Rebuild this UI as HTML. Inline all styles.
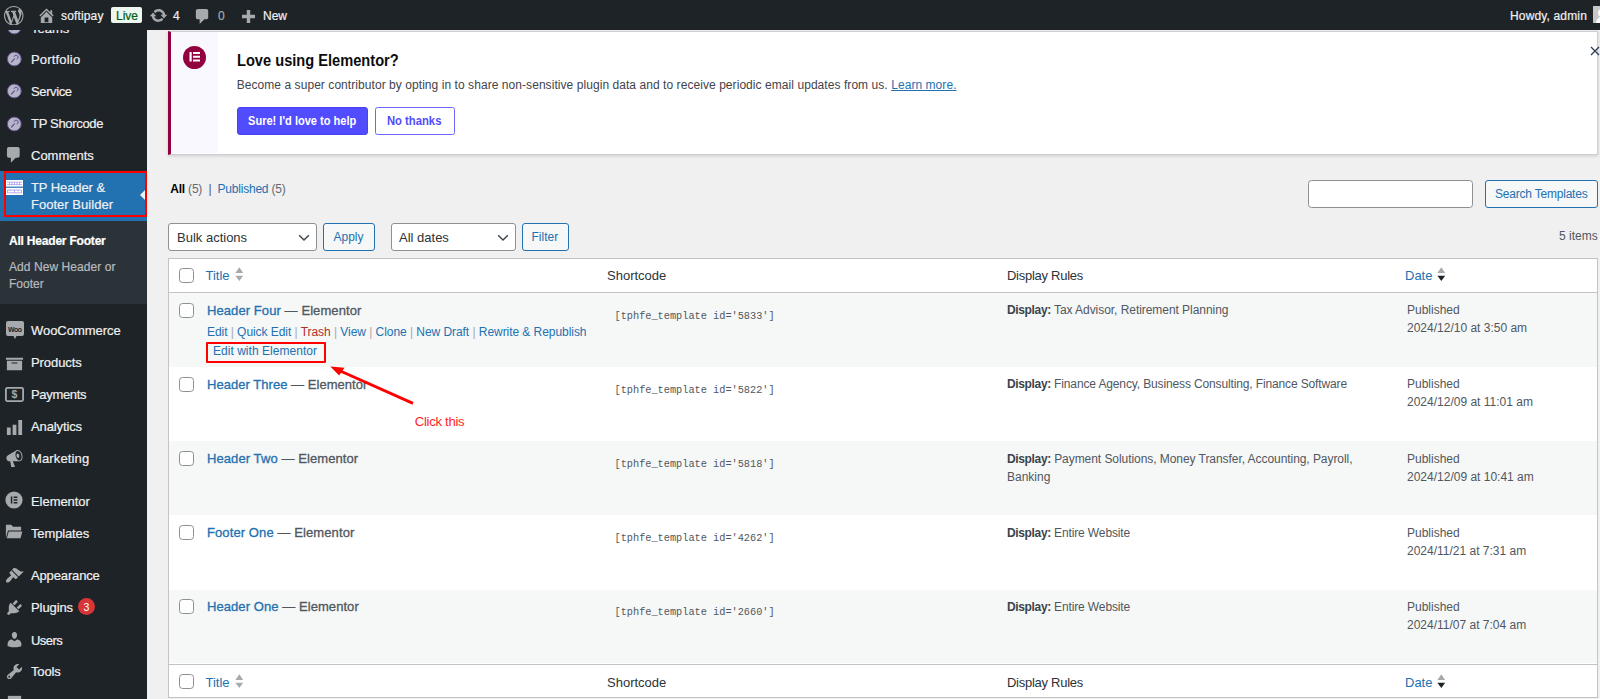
<!DOCTYPE html>
<html lang="en">
<head>
<meta charset="utf-8">
<title>Header Footer Templates</title>
<style>
*{box-sizing:border-box;margin:0;padding:0}
html,body{width:1600px;height:699px;overflow:hidden;background:#f0f0f1}
body{font-family:"Liberation Sans",sans-serif;font-size:12px;color:#3c434a;position:relative}
a{color:#2271b1;text-decoration:none}
.abs{position:absolute}
.t{position:absolute;white-space:nowrap;line-height:1}

/* admin bar */
#bar{position:absolute;left:0;top:0;width:1600px;height:30px;background:#1d2327;z-index:5}
#bar .t{color:#f0f0f1;font-size:12px;-webkit-text-stroke:.2px currentColor}

/* sidebar */
#side{position:absolute;left:0;top:30px;width:147px;height:669px;background:#1d2327}
#side .m{position:absolute;left:31px;color:#f0f0f1;font-size:13px;white-space:nowrap;line-height:1;-webkit-text-stroke:.2px currentColor}
#side .ic{position:absolute}

/* notice */
#notice{position:absolute;left:167.5px;top:31px;width:1430.5px;height:124px;background:#fff;border:1px solid #ccd0d4;border-left:3.7px solid #93003f;box-shadow:0 1px 3px rgba(0,0,0,.15)}

/* table */
#tbl{position:absolute;left:168px;top:258px;width:1431px;height:460px;background:#fff;border:1px solid #c3c4c7}
.row{position:absolute;left:169px;width:1428px;height:74px}
.alt{background:#f6f7f7}
.cb{position:absolute;width:15px;height:15px;border:1px solid #8c8f94;border-radius:3.5px;background:#fff}
.ttl{font-size:13px;font-weight:normal;-webkit-text-stroke:.3px currentColor}.ttl a{-webkit-text-stroke:.3px #2271b1}
.code{font-family:"Liberation Mono","DejaVu Sans Mono",monospace;font-size:10.27px;color:#50575e;margin-top:1.1px}
.sel{position:absolute;height:28px;background:#fff;border:1px solid #8c8f94;border-radius:3px}
.btn{position:absolute;height:28px;background:#f6f7f7;border:1px solid #2271b1;border-radius:3px;color:#2271b1;text-align:center}
</style>
</head>
<body>

<!-- SIDEBAR -->
<div id="side">
<svg class="ic" style="left:6px;top:-11.500px" width="16" height="16" viewBox="0 0 16 16"><circle cx="8.300" cy="8" r="6.900" fill="#b7b3c9" stroke="#5f5088" stroke-width="1"/><path d="M5.300 11.300l3.400-3.800" stroke="#4f4285" stroke-width="1.100" fill="none"/><path d="M8.200 5.600a2 2 0 1 1 2.600 2.500" fill="none" stroke="#4f4285" stroke-width="1"/></svg><span class="m" id="m_teams" style="top:-8.300px">Teams</span>
<svg class="ic" style="left:6px;top:21px" width="16" height="16" viewBox="0 0 16 16"><circle cx="8.300" cy="8" r="6.900" fill="#b7b3c9" stroke="#5f5088" stroke-width="1"/><path d="M5.300 11.300l3.400-3.800" stroke="#4f4285" stroke-width="1.100" fill="none"/><path d="M8.200 5.600a2 2 0 1 1 2.600 2.500" fill="none" stroke="#4f4285" stroke-width="1"/></svg><span class="m" id="m_port" style="top:22.5px;letter-spacing:0.177px">Portfolio</span>
<svg class="ic" style="left:6px;top:53px" width="16" height="16" viewBox="0 0 16 16"><circle cx="8.300" cy="8" r="6.900" fill="#b7b3c9" stroke="#5f5088" stroke-width="1"/><path d="M5.300 11.300l3.400-3.800" stroke="#4f4285" stroke-width="1.100" fill="none"/><path d="M8.200 5.600a2 2 0 1 1 2.600 2.500" fill="none" stroke="#4f4285" stroke-width="1"/></svg><span class="m" id="m_serv" style="top:54.5px;letter-spacing:-0.380px">Service</span>
<svg class="ic" style="left:6px;top:85.5px" width="16" height="16" viewBox="0 0 16 16"><circle cx="8.300" cy="8" r="6.900" fill="#b7b3c9" stroke="#5f5088" stroke-width="1"/><path d="M5.300 11.300l3.400-3.800" stroke="#4f4285" stroke-width="1.100" fill="none"/><path d="M8.200 5.600a2 2 0 1 1 2.600 2.500" fill="none" stroke="#4f4285" stroke-width="1"/></svg><span class="m" id="m_tps" style="top:87.0px;letter-spacing:-0.313px">TP Shorcode</span>
<svg class="ic" style="left:4.300px;top:115px" width="19.600" height="19.600" viewBox="0 0 20 20"><path fill="#a7aaad" d="M5 2h9c1.1 0 2 .9 2 2v7c0 1.1-.9 2-2 2h-2l-5 5v-5H5c-1.100 0-2-.9-2-2V4c0-1.100.9-2 2-2z"/></svg><span class="m" id="m_comm" style="top:118.5px">Comments</span>
<div class="abs" style="left:0;top:141px;width:147px;height:49.6px;background:#2271b1"></div>
<div class="abs" style="left:140px;top:158px;width:0;height:0;border-top:7px solid transparent;border-bottom:7px solid transparent;border-right:7px solid #f0f0f1"></div>
<div class="abs" style="left:3.6px;top:141.4px;width:143.4px;height:45.7px;border:2.5px solid #ff0000"></div>
<svg class="ic" style="left:6px;top:150px" width="17" height="15" viewBox="0 0 17 15"><rect x="0" y="0" width="17" height="6.6" fill="#fff"/><rect x="0" y="7.8" width="17" height="7.2" fill="#fff"/><g stroke="#8f7be0" stroke-width=".6" fill="none"><path d="M1 2.200h15M1 4.600h15M3.500 2.200v2.400M6 2.200v2.400M8.500 2.200v2.400M11 2.200v2.400M13.500 2.200v2.400"/><path d="M1.500 10h14M1.500 12.800h14M1.500 10v2.800M8.500 10v2.800M15.500 10v2.800M4 10v1.400M12 10v1.400"/></g></svg>
<span class="m" id="m_tph" style="top:151.0px;letter-spacing:-0.084px">TP Header &amp;</span><span class="m" id="m_tpf" style="top:168.0px;letter-spacing:0.025px">Footer Builder</span>
<div class="abs" style="left:0;top:190.6px;width:147px;height:83px;background:#2c3338"></div>
<span class="m" id="m_all" style="left:9px;top:205px;font-size:12px;font-weight:bold;color:#fff;letter-spacing:-0.202px">All Header Footer</span>
<span class="m" id="m_add1" style="left:9px;top:230.5px;font-size:12px;color:#b6babf;letter-spacing:0.071px">Add New Header or</span>
<span class="m" id="m_add2" style="left:9px;top:247.600px;font-size:12px;color:#b6babf">Footer</span>
<svg class="ic" style="left:5.5px;top:291px" width="18" height="18" viewBox="0 0 18 18"><path fill="#a7aaad" d="M2 0h14a2 2 0 0 1 2 2v11a2 2 0 0 1-2 2h-5.500l-1.500 3-1.500-3H2a2 2 0 0 1-2-2V2a2 2 0 0 1 2-2z"/><text x="9" y="10.500" font-family="Liberation Sans,sans-serif" font-size="7" font-weight="bold" text-anchor="middle" fill="#1d2327" textLength="14">Woo</text></svg><span class="m" id="m_woo" style="top:294.0px;letter-spacing:-0.042px">WooCommerce</span>
<svg class="ic" style="left:5px;top:323.5px" width="19" height="19" viewBox="0 0 20 20"><path fill="#a7aaad" d="M19 4v2H1V4h18zM2 7h16v10H2V7zm11 3V9H7v1h6z"/></svg><span class="m" id="m_prod" style="top:326.0px;letter-spacing:-0.070px">Products</span>
<svg class="ic" style="left:5px;top:357px" width="19" height="15" viewBox="0 0 19 15"><rect x=".9" y=".9" width="17.200" height="13.200" rx="1.500" fill="none" stroke="#a7aaad" stroke-width="1.800"/><text x="9.500" y="11.300" font-family="Liberation Sans,sans-serif" font-size="10.500" font-weight="bold" text-anchor="middle" fill="#a7aaad">$</text></svg><span class="m" id="m_pay" style="top:358.0px;letter-spacing:-0.320px">Payments</span>
<svg class="ic" style="left:5px;top:387.5px" width="19" height="19" viewBox="0 0 20 20"><path fill="#a7aaad" d="M18 18V2h-4v16h4zm-6 0V7H8v11h4zm-6 0v-8H2v8h4z"/></svg><span class="m" id="m_ana" style="top:390.0px;letter-spacing:-0.115px">Analytics</span>
<svg class="ic" style="left:5px;top:419px" width="19" height="19" viewBox="0 0 20 20"><path fill="#a7aaad" d="M18.15 5.94c.46 1.62.38 3.22-.02 4.48-.42 1.28-1.26 2.18-2.3 2.48-.16.06-.26.06-.4.06-.06.02-.12.02-.18.02-.06.02-.14.02-.22.02h-6.8l2.22 5.5c.02.14-.06.26-.14.34-.08.1-.24.16-.34.16H6.950c-.1 0-.26-.06-.34-.16-.08-.08-.16-.2-.14-.34l-1-5.5H4.250l-.02-.02c-.5.06-1.080-.18-1.540-.62s-.88-1.080-1.060-1.880c-.24-.8-.2-1.560-.02-2.200.18-.62.58-1.080 1.060-1.300l.02-.02 9-5.400c.1-.06.18-.1.24-.16.06-.04.14-.08.24-.12.16-.08.28-.12.5-.18 1.040-.3 2.240.1 3.220.98s1.840 2.240 2.260 3.860zm-2.580 5.980h-.02c.4-.1.74-.34 1.040-.7.58-.7.86-1.760.86-3.040 0-.64-.1-1.300-.28-1.980-.34-1.360-1.020-2.500-1.780-3.240s-1.680-1.100-2.460-.88c-.82.22-1.400.96-1.700 2-.32 1.040-.28 2.360.06 3.720.38 1.360 1 2.500 1.800 3.240.78.740 1.620 1.100 2.480.88zm-2.540-7.080c.22-.04.42-.02.62.04.38.16.76.48 1.020 1s.42 1.200.42 1.780c0 .3-.04.56-.12.8-.18.48-.44.84-.86.94-.34.1-.8-.06-1.140-.4s-.64-.86-.78-1.500c-.18-.62-.12-1.240.02-1.720s.48-.84.82-.94z"/></svg><span class="m" id="m_mar" style="top:422.0px;letter-spacing:0.130px">Marketing</span>
<svg class="ic" style="left:4.900px;top:460.700px" width="18" height="18" viewBox="0 0 18 18"><circle cx="9" cy="9" r="8.600" fill="#a7aaad"/><path fill="#1d2327" d="M5.800 5.600h1.500v6.800H5.800zM8.600 5.600h3.800v1.400H8.600zM8.600 8.300h3.800v1.400H8.600zM8.600 11h3.800v1.400H8.600z"/></svg><span class="m" id="m_ele" style="top:464.5px;letter-spacing:-0.050px">Elementor</span>
<svg class="ic" style="left:4.200px;top:491.500px" width="19" height="19" viewBox="0 0 20 20"><path fill="#a7aaad" d="M18 5H9.500l-2-2H2v14l2.200-8H18V5zm1.350 5H5l-2 7h14.400l1.950-7z"/></svg><span class="m" id="m_tmpl" style="top:496.5px;letter-spacing:-0.139px">Templates</span>
<svg class="ic" style="left:5px;top:535.5px" width="19" height="19" viewBox="0 0 20 20"><path fill="#a7aaad" d="M14.480 11.060L7.410 3.990l1.500-1.500c.5-.56 2.300-.47 3.510.32 1.210.8 1.430 1.280 2.910 2.100 1.180.64 2.450 1.260 4.450.85zm-.71.71L6.700 4.700 4.930 6.470c-.39.39-.39 1.020 0 1.410l1.060 1.060c.39.39.39 1.030 0 1.420-.6.6-1.430 1.110-2.210 1.690-.35.26-.7.53-1.010.84C1.430 14.230.4 16.080 1.400 17.070c.99 1 2.840-.03 4.180-1.360.31-.31.58-.66.85-1.020.57-.78 1.080-1.610 1.690-2.210.39-.39 1.020-.39 1.410 0l1.060 1.060c.39.39 1.020.39 1.410 0z"/></svg><span class="m" id="m_app" style="top:538.5px;letter-spacing:-0.142px">Appearance</span>
<svg class="ic" style="left:5px;top:567.5px" width="19" height="19" viewBox="0 0 20 20"><path fill="#a7aaad" d="M13.110 4.360L9.870 7.600 8 5.730l3.240-3.240c.35-.34 1.050-.2 1.560.32.52.51.66 1.210.31 1.550zm-8 1.770l.91-1.120 9.010 9.010-1.190.84c-.71.71-2.630 1.160-3.820 1.160H6.140L4.900 17.260c-.59.59-1.540.59-2.120 0-.59-.58-.59-1.530 0-2.120l1.240-1.240v-3.880c0-1.130.4-3.190 1.090-3.890zm7.260 3.970l3.240-3.240c.34-.35 1.040-.21 1.550.31.52.51.66 1.210.31 1.550l-3.240 3.250z"/></svg><span class="m" id="m_plug" style="top:570.5px;letter-spacing:-0.092px">Plugins</span>
<div class="abs" style="left:78px;top:568.300px;width:17px;height:17px;border-radius:50%;background:#d63638"></div><span class="t" id="m_badge" style="left:83.500px;top:571.600px;font-size:10.500px;color:#fff">3</span>
<svg class="ic" style="left:5px;top:599.5px" width="19" height="19" viewBox="0 0 20 20"><path fill="#a7aaad" d="M10 9.250c-2.270 0-2.730-3.440-2.730-3.440C7 4.020 7.820 2 9.970 2c2.160 0 2.980 2.020 2.710 3.810 0 0-.41 3.440-2.680 3.440zm0 2.570L12.720 10c2.390 0 4.520 2.330 4.520 4.530v2.490s-3.650 1.130-7.240 1.130c-3.650 0-7.240-1.130-7.240-1.130v-2.490c0-2.250 1.940-4.480 4.470-4.480z"/></svg><span class="m" id="m_users" style="top:603.7px;letter-spacing:-0.531px">Users</span>
<svg class="ic" style="left:5px;top:631.5px" width="19" height="19" viewBox="0 0 20 20"><path fill="#a7aaad" d="M16.680 9.770c-1.340 1.340-3.300 1.670-4.950.99l-5.410 6.520c-.99.99-2.590.99-3.580 0s-.99-2.590 0-3.570l6.520-5.420c-.68-1.650-.35-3.610.99-4.950 1.280-1.280 3.120-1.620 4.720-1.060l-2.890 2.890 2.820 2.820 2.860-2.870c.53 1.580.18 3.390-1.080 4.650zM3.810 16.210c.4.390 1.040.39 1.430 0 .4-.4.400-1.040 0-1.430-.39-.4-1.030-.4-1.430 0-.39.39-.39 1.030 0 1.430z"/></svg><span class="m" id="m_tools" style="top:634.5px;letter-spacing:-0.172px">Tools</span>
<svg class="ic" style="left:5px;top:663px" width="19" height="19" viewBox="0 0 20 20"><path fill="#a7aaad" d="M3 3h14v4H3z"/></svg>
</div>

<!-- ADMIN BAR -->
<div id="bar">
<svg class="abs" style="left:4px;top:5.5px" width="19.5" height="19.5" viewBox="0 0 20 20"><path fill="#a7aaad" d="M20 10c0-5.51-4.49-10-10-10C4.48 0 0 4.49 0 10c0 5.52 4.48 10 10 10 5.51 0 10-4.48 10-10zM7.78 15.37L4.37 6.22c.55-.02 1.17-.08 1.17-.08.5-.06.44-1.13-.06-1.11 0 0-1.45.11-2.37.11-.18 0-.37 0-.58-.01C4.12 2.69 6.87 1.11 10 1.11c2.33 0 4.45.87 6.05 2.34-.68-.11-1.65.39-1.65 1.58 0 .74.45 1.36.9 2.1.35.61.55 1.36.55 2.46 0 1.49-1.4 5-1.4 5l-3.03-8.37c.54-.02.82-.17.82-.17.5-.05.44-1.25-.06-1.22 0 0-1.44.12-2.38.12-.87 0-2.33-.12-2.33-.12-.5-.03-.56 1.2-.06 1.22l.92.08 1.26 3.41zM17.41 10c.24-.64.74-1.87.43-4.25.7 1.29 1.05 2.71 1.05 4.25 0 3.29-1.73 6.24-4.4 7.78.97-2.59 1.94-5.2 2.92-7.78zM6.1 18.09C3.12 16.65 1.11 13.53 1.11 10c0-1.3.23-2.48.72-3.59C3.25 10.3 4.67 14.2 6.1 18.09zm4.03-6.63l2.58 6.98c-.86.29-1.76.45-2.71.45-.79 0-1.57-.11-2.29-.33.81-2.38 1.62-4.74 2.42-7.1z"/></svg>
<svg class="abs" style="left:37px;top:6px" width="19" height="19" viewBox="0 0 20 20"><path fill="#a7aaad" d="M16 8.5l1.53 1.53-1.06 1.06L10 4.62l-6.47 6.47-1.06-1.06L10 2.5l4 4v-2h2v4zm-6-2.46l6 5.99V18H4v-5.97zM12 17v-5H8v5h4z"/></svg>
<span class="t" id="b_site" style="left:61px;top:10px;letter-spacing:0.155px">softipay</span>
<div class="abs" style="left:110.5px;top:7px;width:31.5px;height:16px;background:#edf7ef;border-radius:2px"></div>
<span class="t" id="b_live" style="left:116px;top:10px;color:#005c12">Live</span>
<svg class="abs" style="left:149px;top:6px" width="19" height="19" viewBox="0 0 20 20"><path fill="#a7aaad" d="M10.2 3.28c3.53 0 6.43 2.61 6.92 6h2.08l-3.5 4-3.5-4h2.32c-.45-1.97-2.21-3.45-4.32-3.45-1.45 0-2.73.71-3.54 1.78L4.95 5.66C6.23 4.2 8.11 3.28 10.2 3.28zm-.4 13.44c-3.52 0-6.43-2.61-6.92-6H.8l3.5-4c1.17 1.33 2.33 2.67 3.5 4H5.48c.45 1.97 2.21 3.45 4.32 3.45 1.45 0 2.73-.71 3.54-1.78l1.71 1.95c-1.28 1.46-3.15 2.38-5.25 2.38z"/></svg>
<span class="t" id="b_upd" style="left:173px;top:10px">4</span>
<svg class="abs" style="left:193px;top:6.5px" width="19" height="19" viewBox="0 0 20 20"><path fill="#a7aaad" d="M5 2h9c1.1 0 2 .9 2 2v7c0 1.1-.9 2-2 2h-2l-5 5v-5H5c-1.100 0-2-.9-2-2V4c0-1.100.9-2 2-2z"/></svg>
<span class="t" id="b_com" style="left:218px;top:10px;color:#a7aaad">0</span>
<svg class="abs" style="left:238px;top:7.500px" width="20" height="20" viewBox="0 0 20 20"><path fill="#a7aaad" d="M17 6.800v3.400h-4.800v4.800H8.800v-4.800H4V6.800h4.800V2h3.400v4.800H17z"/></svg>
<span class="t" id="b_new" style="left:263px;top:10px">New</span>
<span class="t" id="b_howdy" style="left:1510px;top:10px;letter-spacing:0.155px">Howdy, admin</span>
<div class="abs" style="left:1593px;top:6px;width:12px;height:17px;background:#c8c8c8;overflow:hidden"><div class="abs" style="left:4.500px;top:2.500px;width:8px;height:8px;border-radius:50%;background:#fff"></div><div class="abs" style="left:2.500px;top:11px;width:14px;height:12px;border-radius:6px 6px 0 0;background:#fff"></div></div>
</div>

<!-- NOTICE -->
<div id="notice">
<div class="abs" style="left:1.800px;top:0;width:46px;height:121px;background:#f8f8fe"></div>
<svg class="abs" style="left:12.2px;top:14px" width="23" height="23" viewBox="0 0 23 23"><circle cx="11.500" cy="11.500" r="11.500" fill="#93003f"/><path fill="#fff" d="M6.500 5.900h2.200v9.700H6.500zM10 5.900h7v2h-7zM10 9.750h7v2h-7zM10 13.600h7v2h-7z"/></svg>
<span class="t" id="n_h" style="left:66.2px;top:19.500px;font-size:17px;font-weight:bold;color:#0c0d0e;transform:scaleX(.8604);transform-origin:0 50%">Love using Elementor?</span>
<span class="t" id="n_p" style="left:66.2px;top:46.500px;font-size:12px;color:#3f444b;letter-spacing:0.061px">Become a super contributor by opting in to share non-sensitive plugin data and to receive periodic email updates from us. <a id="n_a" style="text-decoration:underline">Learn more.</a></span>
<div class="abs" id="n_b1" style="left:66.0px;top:75px;width:131px;height:28px;background:#524cff;border:1px solid #4a42ef;border-radius:3px"></div>
<span class="t" id="n_b1t" style="left:77.7px;top:83px;font-size:12.5px;font-weight:bold;color:#fff;transform:scaleX(.885);transform-origin:0 50%">Sure! I'd love to help</span>
<div class="abs" id="n_b2" style="left:204.2px;top:75px;width:80.500px;height:28px;background:#fff;border:1px solid #6b66ff;border-radius:2.500px"></div>
<span class="t" id="n_b2t" style="left:216.7px;top:83px;font-size:12.5px;font-weight:bold;color:#524cff;transform:scaleX(.9);transform-origin:0 50%">No thanks</span>
<svg class="abs" style="left:1419.500px;top:13.500px" width="10" height="10" viewBox="0 0 10 10"><path d="M1 1l8 8M9 1l-8 8" stroke="#2c3a55" stroke-width="1.300" fill="none"/></svg>
</div>

<!-- TABLE -->
<div id="main">
<span class="t" id="f_all" style="left:170.300px;top:183px;font-size:12px;color:#646970;letter-spacing:-0.214px"><b style="color:#000">All</b> (5) <span style="color:#50575e">&nbsp;|&nbsp;</span> <a>Published</a> (5)</span>
<div class="abs" style="left:1308px;top:179.500px;width:165px;height:28px;background:#fff;border:1px solid #8c8f94;border-radius:3.500px"></div>
<div class="btn" style="left:1485px;top:179.500px;width:113px;height:28px"></div>
<span class="t" id="f_search" style="left:1495px;top:188px;font-size:12px;color:#2271b1;letter-spacing:-0.209px">Search Templates</span>
<div class="sel" style="left:168.300px;top:223px;width:149px"><svg class="abs" style="right:6px;top:9.500px" width="12" height="8" viewBox="0 0 12 8"><path d="M1.200 1.300l4.800 4.800 4.800-4.800" fill="none" stroke="#3c434a" stroke-width="1.400"/></svg></div>
<span class="t" id="f_bulk" style="left:177px;top:230.500px;font-size:13px;color:#2c3338">Bulk actions</span>
<div class="btn" style="left:323px;top:223px;width:51.500px"></div>
<span class="t" id="f_apply" style="left:333.500px;top:231px;font-size:12px;color:#2271b1">Apply</span>
<div class="sel" style="left:390.500px;top:223px;width:125px"><svg class="abs" style="right:6px;top:9.500px" width="12" height="8" viewBox="0 0 12 8"><path d="M1.200 1.300l4.800 4.800 4.800-4.800" fill="none" stroke="#3c434a" stroke-width="1.400"/></svg></div>
<span class="t" id="f_dates" style="left:399px;top:230.500px;font-size:13px;color:#2c3338">All dates</span>
<div class="btn" style="left:521.500px;top:223px;width:47.500px"></div>
<span class="t" id="f_filter" style="left:531.500px;top:231px;font-size:12px;color:#2271b1">Filter</span>
<span class="t" id="f_items" style="left:1559px;top:230px;font-size:12px;color:#50575e">5 items</span>
<div class="abs" style="left:168px;top:258px;width:1430px;height:440px;background:#fff;border:1px solid #c3c4c7"></div>
<div class="cb" style="left:178.700px;top:267.7px"></div>
<span class="t" id="h_title1" style="left:205.500px;top:268.7px;font-size:13px;color:#2271b1">Title</span>
<svg class="abs" style="left:234.5px;top:267.2px" width="9" height="15" viewBox="0 0 9 15"><path d="M4.300 .2L8.200 6.100H.400z" fill="#a7aaad"/><path d="M4.300 14L8.200 8.700H.400z" fill="#a7aaad"/></svg>
<span class="t" id="h_sc1" style="left:607px;top:268.7px;font-size:13px;color:#2c3338">Shortcode</span>
<span class="t" id="h_dr1" style="left:1007px;top:268.7px;font-size:13px;color:#2c3338;letter-spacing:-0.268px">Display Rules</span>
<span class="t" id="h_date1" style="left:1405px;top:268.7px;font-size:13px;color:#2271b1">Date</span>
<svg class="abs" style="left:1436.5px;top:267.2px" width="9" height="15" viewBox="0 0 9 15"><path d="M4.300 .2L8.200 6.100H.400z" fill="#a7aaad"/><path d="M4.300 14L8.200 8.700H.400z" fill="#1d2327"/></svg>
<div class="abs" style="left:169px;top:291.800px;width:1428px;height:1px;background:#c3c4c7"></div>
<div class="abs alt" style="left:169px;top:292.6px;width:1428px;height:74.1px"></div>
<div class="cb" style="left:178.700px;top:303.0px"></div>
<span class="t ttl" id="r0_t" style="left:207px;top:303.8px;color:#50575e;letter-spacing:0.084px"><a class="rt">Header Four</a> — Elementor</span>
<span class="t code" id="r0_c" style="left:614.500px;top:309.8px">[tphfe_template id='5833']</span>
<span class="t" id="r0_d" style="left:1007px;top:304.3px;font-size:12px;color:#50575e;letter-spacing:-0.052px"><b style="color:#3c434a;letter-spacing:-.35px">Display:</b> Tax Advisor, Retirement Planning</span>
<span class="t" id="r0_p" style="left:1407px;top:304.3px;font-size:12px;color:#50575e">Published</span>
<span class="t" id="r0_dt" style="left:1407px;top:322.3px;font-size:12px;color:#50575e">2024/12/10 at 3:50 am</span>
<div class="cb" style="left:178.700px;top:377.1px"></div>
<span class="t ttl" id="r1_t" style="left:207px;top:377.9px;color:#50575e;letter-spacing:0.039px"><a class="rt">Header Three</a> — Elementor</span>
<span class="t code" id="r1_c" style="left:614.500px;top:383.9px">[tphfe_template id='5822']</span>
<span class="t" id="r1_d" style="left:1007px;top:378.4px;font-size:12px;color:#50575e;letter-spacing:-0.133px"><b style="color:#3c434a;letter-spacing:-.35px">Display:</b> Finance Agency, Business Consulting, Finance Software</span>
<span class="t" id="r1_p" style="left:1407px;top:378.4px;font-size:12px;color:#50575e">Published</span>
<span class="t" id="r1_dt" style="left:1407px;top:396.4px;font-size:12px;color:#50575e">2024/12/09 at 11:01 am</span>
<div class="abs alt" style="left:169px;top:441.0px;width:1428px;height:74.3px"></div>
<div class="cb" style="left:178.700px;top:451.2px"></div>
<span class="t ttl" id="r2_t" style="left:207px;top:452.0px;color:#50575e;letter-spacing:0.084px"><a class="rt">Header Two</a> — Elementor</span>
<span class="t code" id="r2_c" style="left:614.500px;top:458.0px">[tphfe_template id='5818']</span>
<span class="t" id="r2_d" style="left:1007px;top:452.5px;font-size:12px;color:#50575e;letter-spacing:-0.058px"><b style="color:#3c434a;letter-spacing:-.35px">Display:</b> Payment Solutions, Money Transfer, Accounting, Payroll,</span>
<span class="t" id="r2_d2" style="left:1007px;top:470.5px;font-size:12px;color:#50575e">Banking</span>
<span class="t" id="r2_p" style="left:1407px;top:452.5px;font-size:12px;color:#50575e">Published</span>
<span class="t" id="r2_dt" style="left:1407px;top:470.5px;font-size:12px;color:#50575e">2024/12/09 at 10:41 am</span>
<div class="cb" style="left:178.700px;top:525.3px"></div>
<span class="t ttl" id="r3_t" style="left:207px;top:526.1px;color:#50575e;letter-spacing:0.098px"><a class="rt">Footer One</a> — Elementor</span>
<span class="t code" id="r3_c" style="left:614.500px;top:532.1px">[tphfe_template id='4262']</span>
<span class="t" id="r3_d" style="left:1007px;top:526.6px;font-size:12px;color:#50575e;letter-spacing:-0.131px"><b style="color:#3c434a;letter-spacing:-.35px">Display:</b> Entire Website</span>
<span class="t" id="r3_p" style="left:1407px;top:526.6px;font-size:12px;color:#50575e">Published</span>
<span class="t" id="r3_dt" style="left:1407px;top:544.6px;font-size:12px;color:#50575e">2024/11/21 at 7:31 am</span>
<div class="abs alt" style="left:169px;top:589.8px;width:1428px;height:73.7px"></div>
<div class="cb" style="left:178.700px;top:599.4px"></div>
<span class="t ttl" id="r4_t" style="left:207px;top:600.2px;color:#50575e;letter-spacing:0.068px"><a class="rt">Header One</a> — Elementor</span>
<span class="t code" id="r4_c" style="left:614.500px;top:606.2px">[tphfe_template id='2660']</span>
<span class="t" id="r4_d" style="left:1007px;top:600.7px;font-size:12px;color:#50575e;letter-spacing:-0.131px"><b style="color:#3c434a;letter-spacing:-.35px">Display:</b> Entire Website</span>
<span class="t" id="r4_p" style="left:1407px;top:600.7px;font-size:12px;color:#50575e">Published</span>
<span class="t" id="r4_dt" style="left:1407px;top:618.7px;font-size:12px;color:#50575e">2024/11/07 at 7:04 am</span>
<span class="t" id="ra" style="left:207px;top:326.3px;font-size:12px;color:#a7aaad;letter-spacing:-0.053px"><a>Edit</a> | <a>Quick Edit</a> | <a style="color:#b32d2e">Trash</a> | <a>View</a> | <a>Clone</a> | <a>New Draft</a> | <a>Rewrite &amp; Republish</a></span>
<span class="t" id="ra2" style="left:213px;top:345.3px;font-size:12px;letter-spacing:0.032px"><a>Edit with Elementor</a></span>
<div class="abs" style="left:169px;top:663.500px;width:1428px;height:1px;background:#c3c4c7"></div>
<div class="cb" style="left:178.700px;top:674.0px"></div>
<span class="t" id="h_title2" style="left:205.500px;top:675.6px;font-size:13px;color:#2271b1">Title</span>
<svg class="abs" style="left:234.5px;top:673.5px" width="9" height="15" viewBox="0 0 9 15"><path d="M4.300 .2L8.200 6.100H.400z" fill="#a7aaad"/><path d="M4.300 14L8.200 8.700H.400z" fill="#a7aaad"/></svg>
<span class="t" id="h_sc2" style="left:607px;top:675.6px;font-size:13px;color:#2c3338">Shortcode</span>
<span class="t" id="h_dr2" style="left:1007px;top:675.6px;font-size:13px;color:#2c3338;letter-spacing:-0.268px">Display Rules</span>
<span class="t" id="h_date2" style="left:1405px;top:675.6px;font-size:13px;color:#2271b1">Date</span>
<svg class="abs" style="left:1436.5px;top:673.5px" width="9" height="15" viewBox="0 0 9 15"><path d="M4.300 .2L8.200 6.100H.400z" fill="#a7aaad"/><path d="M4.300 14L8.200 8.700H.400z" fill="#1d2327"/></svg>
<div class="abs" style="left:205.800px;top:341.500px;width:120.200px;height:21.400px;border:2.500px solid #ff0000;border-radius:1px"></div>
<svg class="abs" style="left:320px;top:360px" width="100" height="50" viewBox="320 360 100 50"><path d="M413 403.400L337 369.500" stroke="#ff0000" stroke-width="2.800" fill="none"/><path d="M330.300 366.500L344.500 367.800L339.200 375.600z" fill="#ff0000"/></svg>
<span class="t" id="click" style="left:414.800px;top:414.700px;font-size:13.200px;color:#ff1f1f;letter-spacing:-0.327px">Click this</span>
</div>

</body>
</html>
